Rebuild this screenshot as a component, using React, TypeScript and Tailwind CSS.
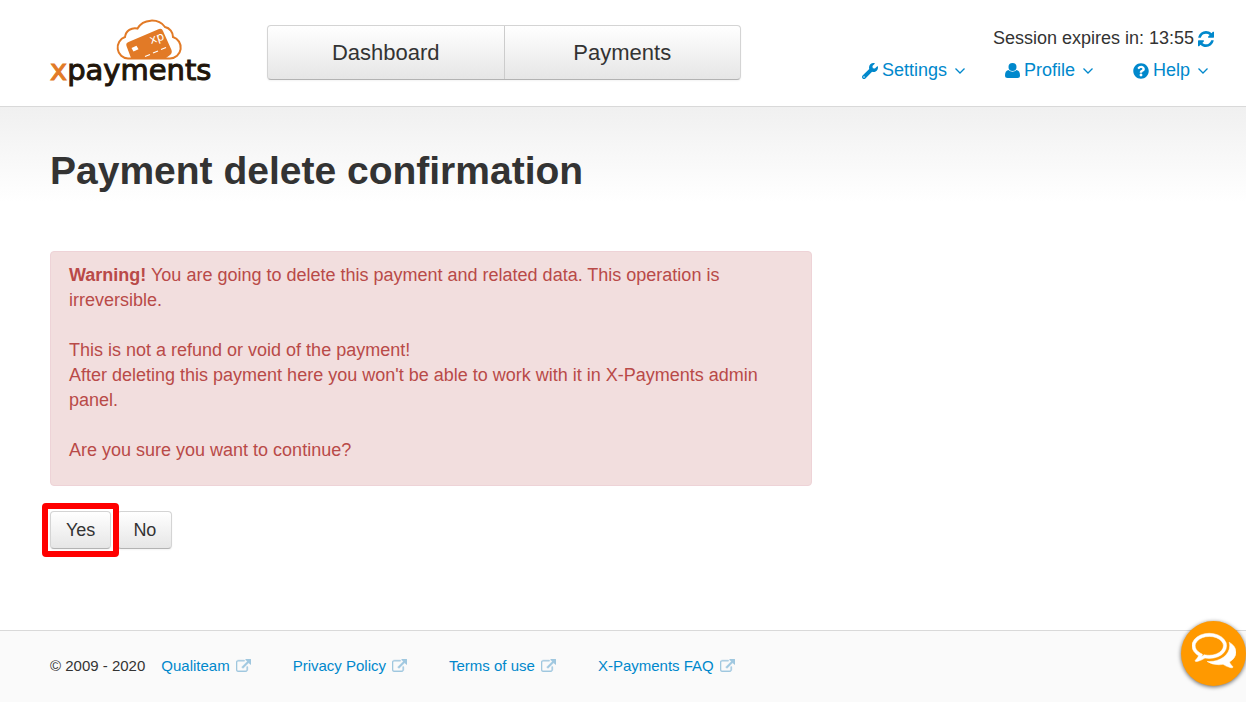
import type { ReactNode } from "react";
import { FaWrench, FaQuestionCircle } from "react-icons/fa";

const footerLinks = ["Qualiteam", "Privacy Policy", "Terms of use", "X-Payments FAQ"];

function Logo() {
  return (
    <a href="#" aria-label="xpayments" className="block shrink-0">
      <svg className="overflow-visible" width="164" height="72" viewBox="0 0 164 72">
        <path
          d="M78 40.500A10.500 11 0 0 1 75 19A10 10 0 0 1 87.500 10.500A16 14.500 0 0 1 115 9A10 10 0 0 1 123 19A11 11 0 0 1 120 40.500Z"
          fill="#fff"
          stroke="#e27a26"
          strokeWidth="2"
        />
        <path
          d="M76.500 28Q75.500 25 78.500 24L109 11Q112 10 113 13L121.500 32Q122.500 35 120 37L116 40H81Z"
          fill="#e27a26"
        />
        <path d="M81.500 30l5-2.300 2 3.500-5 2.300z" fill="#fff" />
        <path d="M95 38.500l5-2M103 35l5-2M111 31.500l5-2" stroke="#fff" strokeWidth="1.3" />
        <text
          x="101"
          y="26"
          fill="#fff"
          fontSize="12"
          fontFamily="DejaVu Sans"
          transform="rotate(-18 101 26)"
        >
          xp
        </text>
        <text
          x="0"
          y="62"
          fontSize="29"
          fontFamily="DejaVu Sans"
          fill="#21150a"
          stroke="#21150a"
          strokeWidth="1"
        >
          <tspan fill="#e27a26" stroke="#e27a26">x</tspan>payments
        </text>
      </svg>
    </a>
  );
}

function RefreshIcon() {
  return (
    <svg width="16" height="16" viewBox="0 0 1536 1536" fill="currentColor">
      <path d="M1511 928q0 5-1 7-64 268-268 434.500t-478 166.500q-146 0-282.500-55t-243.500-157l-129 129q-19 19-45 19t-45-19-19-45v-448q0-26 19-45t45-19h448q26 0 45 19t19 45-19 45l-137 137q71 66 161 102t187 36q134 0 250-65t186-179q11-17 53-117 8-23 30-23h192q13 0 22.500 9.500t9.500 22.500zm25-800v448q0 26-19 45t-45 19h-448q-26 0-45-19t-19-45 19-45l138-138q-148-137-349-137-134 0-250 65t-186 179q-11 17-53 117-8 23-30 23h-199q-13 0-22.500-9.500t-9.500-22.500v-7q65-268 270-434.500t480-166.500q146 0 284 55.500t245 156.500l130-129q19-19 45-19t45 19 19 45z" />
    </svg>
  );
}

function UserIcon() {
  return (
    <svg width="15" height="15" viewBox="0 0 15 15" fill="currentColor">
      <ellipse cx="7.500" cy="4" rx="4" ry="4" />
      <path d="M3.300 7C1 7.500 0 9.500 0 12.500Q0 15 2.500 15H12.500Q15 15 15 12.500C15 9.500 14 7.500 11.700 7Q7.500 10.500 3.300 7Z" />
    </svg>
  );
}

function ExternalIcon() {
  return (
    <svg width="15" height="13" viewBox="0 0 1792 1536" fill="#a0c8e0" stroke="#a0c8e0" strokeWidth="50">
      <path d="M1408 928v320q0 119-84.500 203.500t-203.500 84.500h-832q-119 0-203.500-84.500t-84.500-203.500v-832q0-119 84.500-203.500t203.500-84.500h704q14 0 23 9t9 23v64q0 14-9 23t-23 9h-704q-66 0-113 47t-47 113v832q0 66 47 113t113 47h832q66 0 113-47t47-113v-320q0-14 9-23t23-9h64q14 0 23 9t9 23zm384-864v512q0 26-19 45t-45 19-45-19l-176-176-652 652q-10 10-23 10t-23-10l-114-114q-10-10-10-23t10-23l652-652-176-176q-19-19-19-45t19-45 45-19h512q26 0 45 19t19 45z" />
    </svg>
  );
}

function ChatIcon() {
  return (
    <svg width="44" height="44" viewBox="0 0 1792 1792" fill="currentColor" stroke="currentColor" strokeWidth="20">
      <path d="M704 384q-153 0-286 52t-211.500 141-78.500 191q0 82 53 158t149 132l97 56-35 84q34-20 62-39l44-31 53 10q78 14 153 14 153 0 286-52t211.500-141 78.500-191-78.500-191-211.500-141-286-52zm0-128q191 0 353.500 68.500t256.500 186.500 94 257-94 257-256.500 186.500-353.500 68.500q-86 0-176-16-124 88-278 128-36 9-86 16h-3q-11 0-20.500-8t-11.500-21q-1-3-1-6.500t.5-6.500 2-6l2.500-5 3.500-5.500 4-5 4.500-5 4-4.500q5-6 23-25t26-29.500 22.500-29 25-38.500 20.500-44q-124-72-195-177t-71-224q0-139 94-257t256.500-186.500 353.500-68.500zm822 1169q10 24 20.500 44t25 38.500 22.500 29 26 29.500 23 25q1 1 4 4.500t4.500 5 4 5 3.500 5.500l2.500 5 2 6 .5 6.500-1 6.500q-3 14-13 22t-22 7q-50-7-86-16-154-40-278-128-90 16-176 16-271 0-472-132 58 4 88 4 161 0 309-45t264-129q125-92 192-212t67-254q0-77-23-152 129 71 204 178t75 230q0 120-71 224.500t-195 176.500z" />
    </svg>
  );
}

function MenuItem({ icon, label }: { icon: ReactNode; label: string }) {
  return (
    <button className="flex items-center text-[#0088cc]">
      {icon}
      <span className="ml-1">{label}</span>
      <svg className="ml-2" width="10" height="6" viewBox="0 0 10 6" fill="none" stroke="currentColor" strokeWidth="1.3">
        <path d="M0.500 0.500L5 5L9.500 0.500" />
      </svg>
    </button>
  );
}

function App() {
  return (
    <div className="flex min-h-screen flex-col bg-white font-['Liberation_Sans',Arial,sans-serif] text-lg leading-[25px] text-[#333333]">
      <header className="flex items-start border-b border-[#d9d9d9] pb-4 pl-[50px] pr-8 pt-[18px]">
        <Logo />
        <nav className="ml-[53px] mt-[7px] flex h-[55px] w-[474px] rounded border border-[#d4d4d4] border-b-[#b3b3b3] bg-linear-to-b from-white to-[#e6e6e6] text-[22px] shadow-xs">
          <a href="#" className="flex flex-1 items-center justify-center border-r border-[#cccccc]">
            Dashboard
          </a>
          <a href="#" className="flex flex-1 items-center justify-center">
            Payments
          </a>
        </nav>

        <div className="ml-auto mt-2 flex flex-col items-end gap-[7px]">
          <div className="flex items-center gap-1">
            <span>Session expires in: 13:55</span>
            <button aria-label="Refresh session" className="text-[#0088cc]">
              <RefreshIcon />
            </button>
          </div>
          <div className="flex gap-10 pr-1.5">
            <MenuItem icon={<FaWrench size={16} />} label="Settings" />
            <MenuItem icon={<UserIcon />} label="Profile" />
            <MenuItem icon={<FaQuestionCircle size={16} />} label="Help" />
          </div>
        </div>
      </header>

      <main className="grow bg-[linear-gradient(to_bottom,#f0f0f0,#ffffff_95px)] px-[50px] pb-20 pt-11">
        <h1 className="text-[39px] font-bold leading-10">Payment delete confirmation</h1>

        <div
          role="alert"
          className="mt-[60px] w-[66.5%] rounded border border-[#eed3d7] bg-[#f2dede] pb-[22px] pl-[18px] pr-[42px] pt-[11px] text-[#b94a48]"
        >
          <p>
            <strong>Warning!</strong> You are going to delete this payment and related data. This
            operation is irreversible.
          </p>
          <p className="mt-[25px]">
            This is not a refund or void of the payment!
            <br />
            After deleting this payment here you won't be able to work with it in X-Payments admin
            panel.
          </p>
          <p className="mt-[25px]">Are you sure you want to continue?</p>
        </div>

        <div className="mt-[25px] flex gap-1.5">
          <div className="relative">
            <button className="flex h-[38px] items-center rounded border border-[#d4d4d4] border-b-[#b3b3b3] bg-linear-to-b from-white to-[#e6e6e6] px-[15px] shadow-xs">
              Yes
            </button>
            {/* highlight frame */}
            <span className="pointer-events-none absolute -inset-2 z-10 rounded-sm border-6 border-[#ff0000]" />
          </div>
          <button className="flex h-[38px] items-center rounded border border-[#d4d4d4] border-b-[#b3b3b3] bg-linear-to-b from-white to-[#e6e6e6] px-[15px] shadow-xs">
            No
          </button>
        </div>
      </main>

      <footer className="flex flex-wrap items-center border-t border-[#d9d9d9] bg-[#fafafa] pb-6 pl-[50px] pr-[50px] pt-[22px] text-[15px]">
        <span className="mr-4">© 2009 - 2020</span>
        <div className="flex flex-wrap gap-x-[42px]">
          {footerLinks.map((label) => (
            <a key={label} href="#" className="flex items-center gap-1.5 text-[#0088cc]">
              {label}
              <ExternalIcon />
            </a>
          ))}
        </div>
      </footer>

      <button
        aria-label="Open chat"
        className="fixed bottom-4 right-0 flex size-[65px] items-center justify-center rounded-full bg-[#ff9900] pb-2.5 text-white shadow-[0_1px_4px_rgba(0,0,0,0.6)]"
      >
        <ChatIcon />
      </button>
    </div>
  );
}

export default App;
